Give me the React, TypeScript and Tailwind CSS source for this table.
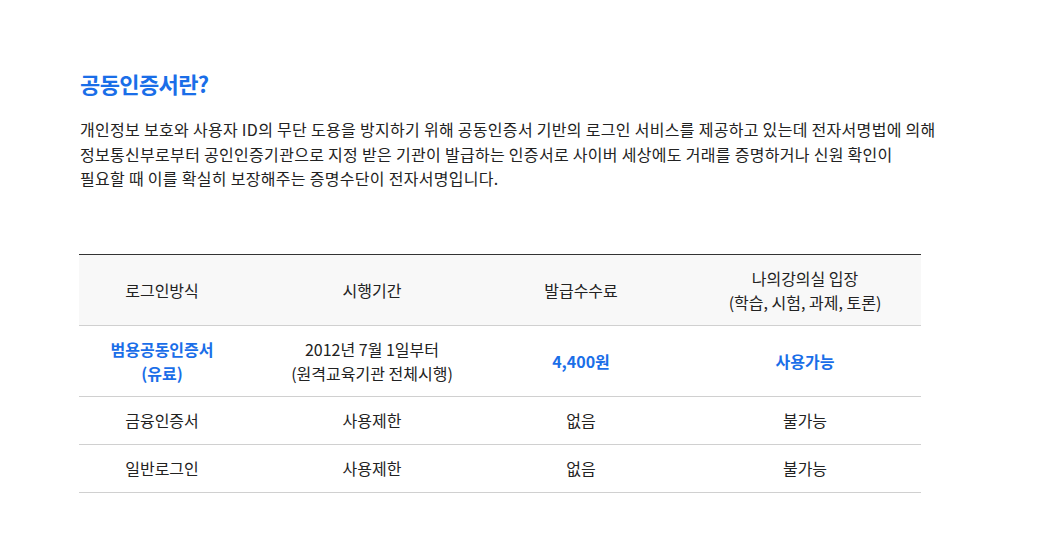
const FONT = "font-['Noto_Sans_CJK_KR','Noto_Sans',sans-serif]";

const ROWS = [
  { kind: "범용공동인증서\n(유료)", period: "2012년 7월 1일부터\n(원격교육기관 전체시행)", fee: "4,400원", access: "사용가능", blue: true, tall: true },
  { kind: "금융인증서", period: "사용제한", fee: "없음", access: "불가능" },
  { kind: "일반로그인", period: "사용제한", fee: "없음", access: "불가능" },
];

function Cell({ children, className = "" }: { children: React.ReactNode; className?: string }) {
  return <div className={"flex items-center justify-center text-center whitespace-pre-line " + className}>{children}</div>;
}

export default function App() {
  return (
    <div className={"w-[1040px] h-[545px] bg-white text-[#222] " + FONT}>
      <div className="pl-[80px] pt-[68px]">
        <h2 className="text-[22px] font-bold leading-[30px] text-[#1a6ee8] tracking-[-0.6px]">공동인증서란?</h2>
        <p className="mt-[19px] w-[920px] text-[16px] leading-[24.5px] tracking-[0.3px]">
          개인정보 보호와 사용자 ID의 무단 도용을 방지하기 위해 공동인증서 기반의 로그인 서비스를 제공하고 있는데 전자서명법에 의해
          <br />
          정보통신부로부터 공인인증기관으로 지정 받은 기관이 발급하는 인증서로 사이버 세상에도 거래를 증명하거나 신원 확인이
          <br />
          필요할 때 이를 확실히 보장해주는 증명수단이 전자서명입니다.
        </p>
      </div>

      <div className="ml-[79px] mt-[63px] w-[842px] border-t border-[#333] text-[16px]">
        <div className="grid grid-cols-[166px_254px_164px_258px] h-[71px] bg-[#f8f8f8] border-b border-[#d0d0d0] leading-[24px]">
          <Cell>로그인방식</Cell>
          <Cell>시행기간</Cell>
          <Cell>발급수수료</Cell>
          <Cell className="pl-[26px]">{"나의강의실 입장\n(학습, 시험, 과제, 토론)"}</Cell>
        </div>
        {ROWS.map((r) => (
          <div
            key={r.kind}
            className={
              "grid grid-cols-[166px_254px_164px_258px] border-b border-[#d0d0d0] leading-[24px] " +
              (r.tall ? "h-[71px]" : "h-[48px]")
            }
          >
            <Cell className={r.blue ? "text-[#1a6ee8] font-bold" : ""}>{r.kind}</Cell>
            <Cell>{r.period}</Cell>
            <Cell className={r.blue ? "text-[#1a6ee8] font-bold" : ""}>{r.fee}</Cell>
            <Cell className={"pl-[26px] " + (r.blue ? "text-[#1a6ee8] font-bold" : "")}>{r.access}</Cell>
          </div>
        ))}
      </div>
    </div>
  );
}
